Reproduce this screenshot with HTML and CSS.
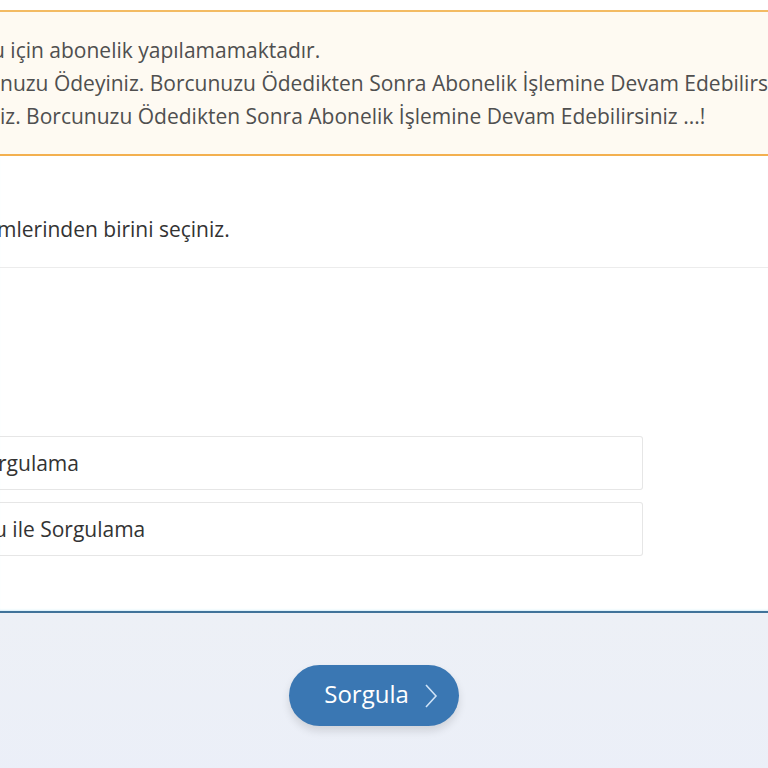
FILE: index.html
```html
<!DOCTYPE html>
<html lang="tr">
<head>
    <meta charset="UTF-8">
    <meta name="viewport" content="width=device-width, initial-scale=1.0">
    <title>Abonelik Sorgulama</title>
    <link rel="stylesheet" href="styles.css">
</head>
<body>
    <div class="alert">
        <p><span class="cut cut-u">u</span> için abonelik yapılamamaktadır.</p>
        <p>nuzu Ödeyiniz. Borcunuzu Ödedikten Sonra Abonelik İşlemine Devam Edebilirsiniz ...!</p>
        <p>iz. Borcunuzu Ödedikten Sonra Abonelik İşlemine Devam Edebilirsiniz ...!</p>
    </div>

    <div class="form-body">
        <p class="hint"><span class="cut cut-m">m</span>lerinden birini seçiniz.</p>
        <div class="divider"></div>

        <div class="options">
            <label class="option"><span><span class="cut cut-r">r</span>gulama</span></label>
            <label class="option"><span><span class="cut cut-u2">u</span> ile Sorgulama</span></label>
        </div>
    </div>

    <div class="form-footer">
        <button class="btn-query">
            Sorgula
            <svg class="chevron" width="14" height="26" viewBox="0 0 14 26">
                <path d="M2 2 L12 13 L2 24" fill="none" stroke="currentColor" stroke-width="1.6"/>
            </svg>
        </button>
    </div>
</body>
</html>
```

FILE: styles.css
```css
html, body {
    margin: 0;
    padding: 0;
    height: 100%;
    overflow: hidden;
}

body {
    font-family: 'Open Sans', 'Noto Sans', sans-serif;
    font-size: 21px;
    color: #333;
    background: #fff;
}

.cut {
    display: inline-block;
}

.cut-u { margin-left: -8px; }
.cut-m { margin-left: -3px; }
.cut-r { margin-left: -2px; }
.cut-u2 { margin-left: -6px; }

.alert {
    margin-top: 10px;
    background: #fefaf2;
    border-top: 2px solid #f3bb63;
    border-bottom: 2px solid #f3b04f;
    padding: 22px 0 21px;
    color: #4f4f4f;
    white-space: nowrap;
    overflow: hidden;
}

.alert p {
    margin: 0;
    line-height: 33px;
}

.form-body {
    padding-top: 59px;
    padding-bottom: 55px;
    border-bottom: 2px solid #41739a;
    box-shadow: 0 -2px 2px -1px #d7f1fb inset;
}

.hint {
    margin: 0;
    line-height: 28px;
}

.divider {
    height: 1px;
    background: #ececec;
    margin-top: 24px;
    margin-bottom: 168px;
}

.options {
    display: flex;
    flex-direction: column;
    gap: 12px;
    width: 643px;
}

.option {
    display: flex;
    align-items: center;
    height: 52px;
    border: 1px solid #e6e6e6;
    border-left: none;
    border-radius: 0 3px 3px 0;
}

.form-footer {
    background: linear-gradient(#edf0f6, #ebeff8);
    display: flex;
    padding: 52px 0 60px 289px;
}

.btn-query {
    display: flex;
    align-items: center;
    justify-content: center;
    gap: 15px;
    width: 170px;
    height: 61px;
    border: none;
    border-radius: 31px;
    background: #3a77b3;
    color: #fff;
    font-family: 'Open Sans', sans-serif;
    font-size: 24px;
    box-shadow: 0 5px 8px rgba(0, 0, 0, 0.12);
    cursor: pointer;
    padding: 0 0 4px 14px;
}

.chevron {
    color: #cfe3f7;
    margin-top: 4px;
}
```
